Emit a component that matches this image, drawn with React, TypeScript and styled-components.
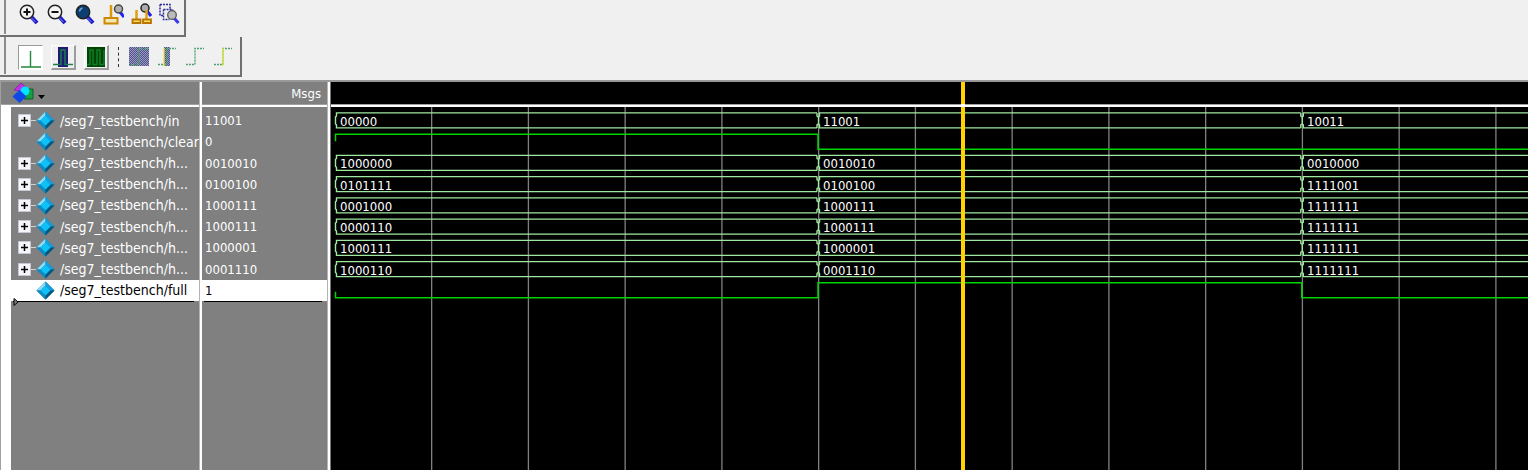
import React from "react";
import styled, { createGlobalStyle } from "styled-components";

const Global = createGlobalStyle`
  * { box-sizing: border-box; }
  body { margin: 0; background: #f0f0f0; font-family: "DejaVu Sans Condensed", "DejaVu Sans", sans-serif; font-size: 13px; }
`;

const Page = styled.main`
  display: flex;
  flex-direction: column;
  min-height: 100vh;
`;

const Toolbar = styled.div<{ $w: number; $h: number }>`
  display: flex;
  width: ${(p) => p.$w}px;
  height: ${(p) => p.$h}px;
  padding-left: 4px;
  border-right: 2px solid #707070;
  border-bottom: 2px solid #707070;
`;

const Grip = styled.span`
  width: 2px;
  margin-bottom: 1px;
  background: #8c8c8c;
`;

const ToolGroup = styled.div<{ $left: number; $top: number }>`
  display: flex;
  align-items: center;
  align-self: flex-start;
  gap: 8px;
  margin-left: ${(p) => p.$left}px;
  margin-top: ${(p) => p.$top}px;
`;

const ToolButton = styled.button<{ $look?: "pressed" | "raised" }>`
  display: flex;
  align-items: center;
  justify-content: center;
  width: ${(p) => (p.$look ? 25 : 20)}px;
  height: ${(p) => (p.$look ? 25 : 20)}px;
  padding: 0;
  background: ${(p) => (p.$look === "pressed" ? "#fff" : "transparent")};
  border: 0 solid;
  border-width: ${(p) => (p.$look === "raised" ? "1px 2px 2px 1px" : p.$look ? "1px" : "0")};
  border-color: ${(p) => (p.$look === "pressed" ? "#999 #fff #fff #999" : "#fff #9c9c9c #9c9c9c #fff")};

  svg {
    flex: none;
  }
`;

const Divider = styled.span`
  height: 20px;
  margin: 10px 0 0 9px;
  border-left: 1px dashed #333;
`;

const Panes = styled.div`
  flex: 1;
  display: grid;
  grid-template-columns: 199px 126px minmax(0, 1fr);
  column-gap: 2px;
  margin-top: 3px;
  border-top: 2px solid #999;
  border-left: 1px solid #a0a0a0;
  background: #fff;
`;

const Pane = styled.section`
  display: flex;
  flex-direction: column;
  border-right: 1px solid #b4b4b4;
`;

const WavePane = styled.section`
  position: relative;
  display: flex;
  flex-direction: column;
  border-left: 1px solid #777;
`;

const PaneHead = styled.header<{ $dark?: boolean }>`
  display: flex;
  align-items: center;
  height: 23px;
  margin-bottom: 2px;
  background: ${(p) => (p.$dark ? "#000" : "#808080")};
  color: #fff;
  border-bottom: 1px solid #a0a0a0;
`;

const MsgsHead = styled(PaneHead)`
  justify-content: flex-end;
  padding-right: 6px;
`;

const MenuButton = styled.button`
  display: flex;
  margin-left: 11px;
  padding: 0;
  border: 0;
  background: none;
`;

const PaneBody = styled.div<{ $inset?: boolean }>`
  flex: 1;
  margin-left: ${(p) => (p.$inset ? 10 : 0)}px;
  padding-top: 3px;
  background: #808080;
`;

const Rows = styled.div`
  display: grid;
  grid-template-rows: repeat(9, 1fr);
  height: 191px;
`;

const Row = styled.div<{ $selected?: boolean }>`
  display: flex;
  align-items: center;
  overflow: hidden;
  white-space: nowrap;
  color: ${(p) => (p.$selected ? "#000" : "#fff")};
  background: ${(p) => (p.$selected ? "#fff" : "transparent")};
`;

const ValueRow = styled(Row)`
  padding-left: 3px;
`;

const Expander = styled.button`
  display: flex;
  width: 18px;
  height: 13px;
  margin-left: 7px;
  padding: 0;
  border: 0;
  background: none;
`;

const Blank = styled.span`
  width: 18px;
  margin-left: 7px;
`;

const Name = styled.span`
  margin-left: 5px;
  font-size: 14px;
  line-height: 18px;
`;

const InsertLine = styled.div`
  height: 1px;
  margin: 0 5px 0 2px;
  background: #000;
`;

const InsertMark = styled.svg`
  position: absolute;
  margin: -4px 0 0 2px;
`;

const WaveBody = styled.div`
  flex: 1;
  background: #000;
  overflow: hidden;
`;

const WaveSvg = styled.svg`
  display: block;
  width: 100%;
  height: 100%;
  min-height: 200px;
`;

const Cursor = styled.div`
  position: absolute;
  top: 0;
  bottom: 0;
  left: 630px;
  width: 4px;
  background: linear-gradient(#ffd200 0 22px, #fff 22px 25px, #ffd200 25px);
`;

const signals = [
  { name: "/seg7_testbench/in", bus: true, values: ["00000", "11001", "10011"], now: "11001" },
  { name: "/seg7_testbench/clear", bus: false, values: ["1", "0", "0"], now: "0" },
  { name: "/seg7_testbench/h...", bus: true, values: ["1000000", "0010010", "0010000"], now: "0010010" },
  { name: "/seg7_testbench/h...", bus: true, values: ["0101111", "0100100", "1111001"], now: "0100100" },
  { name: "/seg7_testbench/h...", bus: true, values: ["0001000", "1000111", "1111111"], now: "1000111" },
  { name: "/seg7_testbench/h...", bus: true, values: ["0000110", "1000111", "1111111"], now: "1000111" },
  { name: "/seg7_testbench/h...", bus: true, values: ["1000111", "1000001", "1111111"], now: "1000001" },
  { name: "/seg7_testbench/h...", bus: true, values: ["1000110", "0001110", "1111111"], now: "0001110" },
  { name: "/seg7_testbench/full", bus: false, values: ["0", "1", "0"], now: "1" },
];

const EDGES = [4, 487, 970.8];
const END = 8000;
const PITCH = 21.24;
const SWING = 15;

function Lens({ sign, fill = "#f4f4f4" }: { sign?: "plus" | "minus"; fill?: string }) {
  return (
    <svg width="20" height="22" viewBox="0 0 20 22">
      <path d="M12.5 14 18 20" stroke="#1a1ac8" strokeWidth="4" />
      <path d="M12 14.500 16.500 19" stroke="#8a8aff" strokeWidth="1" />
      <circle cx="8" cy="9" r="6.700" fill={fill} stroke="#222" strokeWidth="1.500" />
      {sign && <path d={sign === "plus" ? "M4.500 9h7M8 5.500v7" : "M4.500 9h7"} stroke="#111" strokeWidth="2" />}
      {!sign && <path d="M4.500 8.500q.5-3 3-3.500" stroke="#6fa6d0" strokeWidth="1.500" fill="none" />}
    </svg>
  );
}

function CursorZoom({ twin }: { twin?: boolean }) {
  return (
    <svg width="21" height="22" viewBox="0 0 21 22">
      {twin ? (
        <>
          <path d="M16 8l4 5" stroke="#2020e0" strokeWidth="3" />
          <circle cx="14" cy="5" r="4" fill="#aaa" stroke="#222" strokeWidth="1.500" />
          <path d="M5.500 7v9M15.500 7v9" stroke="#e0a010" strokeWidth="2.500" />
          <path d="M1.500 16.500h8v3.500h-8zM12 16.500h8v3.500h-8z" stroke="#b87400" strokeWidth="1.800" fill="#ffe060" />
        </>
      ) : (
        <>
          <path d="M17 9l4 5" stroke="#2020ff" strokeWidth="3" />
          <circle cx="15.500" cy="6" r="4" fill="#b0b0b0" stroke="#444" strokeWidth="1.500" />
          <path d="M8 2v13" stroke="#dc9a08" strokeWidth="2.500" />
          <path d="M1.500 15h13v5.500h-13z" stroke="#cc8800" strokeWidth="2" fill="#f4e6b0" />
        </>
      )}
    </svg>
  );
}

function AreaZoom() {
  return (
    <svg width="21" height="22" viewBox="0 0 21 22">
      <path d="M1 1.500h10v4M1 1.500v11h3M4.500 6.500h9v4M4.500 6.500v10h6" fill="none" stroke="#2a2a9c" strokeWidth="1.500" strokeDasharray="2 1" />
      <path d="M15 15l4.500 5" stroke="#3838ee" strokeWidth="3" />
      <circle cx="13" cy="12" r="4.300" fill="#bbb" stroke="#555" strokeWidth="1.300" />
    </svg>
  );
}

function PulseIcon({ kind }: { kind: "edge" | "blue" | "green" }) {
  return (
    <svg width="22" height="22" viewBox="0 0 22 22">
      {kind === "edge" && <path d="M1 20h20M10.500 20V4" stroke="#22883c" strokeWidth="1.400" />}
      {kind === "blue" && (
        <>
          <path d="M6 1h10v20H6z" fill="#1c1c70" />
          <path d="M1 18.500h8V4h4v14.500h8" stroke="#1f7f50" strokeWidth="1.400" fill="none" />
        </>
      )}
      {kind === "green" && (
        <>
          <path d="M2 1h18v20H2z" fill="#004400" />
          <path d="M2 18.500h3V4h3v14.500h4V4h3v14.500h4V4" stroke="#108030" strokeWidth="1.400" fill="none" />
        </>
      )}
    </svg>
  );
}

function EdgeIcon({ fill, bar }: { fill?: "wide" | "narrow"; bar?: boolean }) {
  return (
    <svg width="20" height="22" viewBox="0 0 20 22">
      <defs>
        <pattern id="dither" width="2" height="2" patternUnits="userSpaceOnUse">
          <path d="M0 0h2v2H0z" fill="#9a9ac0" />
          <path d="M0 0h1v1H0zM1 1h1v1H1z" fill="#50508c" />
        </pattern>
      </defs>
      {fill && <path d={fill === "wide" ? "M0 1h20v19H0z" : "M7 1h6v19H7z"} fill="url(#dither)" />}
      <path d="M1 18.500h9v-16h9" fill="none" stroke="#4fa070" strokeWidth="1.400" strokeDasharray="2 1" />
      {bar && <path d={fill ? "M7 2v18" : "M10 2v18"} stroke="#e8e830" strokeWidth="1.200" />}
    </svg>
  );
}

function Diamond() {
  return (
    <svg width="19" height="19" viewBox="0 0 19 19">
      <path d="M9.500.5 18.500 9.500l-9 9-9-9z" fill="#0878a8" />
      <path d="M9.500.5v4L4.500 9.500h-4z" fill="#8cdcf4" />
      <path d="M.5 9.500h4l5 5v4z" fill="#0c8cc4" />
      <path d="M9.500.5l9 9h-4l-5-5z" fill="#1a9cd8" />
      <path d="M9.500 18.500v-4l5-5h4z" fill="#04587c" />
      <path d="M9.500 4.500l5 5-5 5-5-5z" fill="#10c0f8" />
    </svg>
  );
}

function WaveRow({ index }: { index: number }) {
  const s = signals[index];
  const hi = 5.9 + index * PITCH;
  const lo = hi + SWING;
  if (!s.bus) {
    const y = s.values.map((v) => (v === "1" ? hi : lo));
    const tick = s.values[0] === "1" ? 7 : -6;
    return (
      <path
        d={`M4.500 ${y[0] + tick}V${y[0]}H${EDGES[1]}V${y[1]}H${EDGES[2]}V${y[2]}H${END}`}
        fill="none"
        stroke="#00d400"
        strokeWidth="1.500"
      />
    );
  }
  return (
    <g fill="none" stroke="#a0e8a0" strokeWidth="1.400">
      {EDGES.map((x, i) => {
        const next = EDGES[i + 1] ?? END;
        return (
          <g key={x}>
            <path d={`M${next - 1} ${hi}H${x + 1.5}V${hi + 3}L${x + 0.5} ${hi + 4}V${lo - 4}L${x + 1.5} ${lo - 3}V${lo}H${next - 1}`} />
            {i > 0 && <path d={`M${x - 1} ${hi}V${hi + 3}L${x} ${hi + 4}M${x} ${lo - 4}L${x - 1} ${lo - 3}V${lo}`} />}
            <text x={Math.round(x) + 5} y={Math.round(hi) + 13} fill="#fff" stroke="none">
              {s.values[i]}
            </text>
          </g>
        );
      })}
    </g>
  );
}

export default function App() {
  return (
    <Page>
      <Global />
      <Toolbar $w={186} $h={37}>
        <Grip />
        <ToolGroup $left={13} $top={4}>
          <ToolButton aria-label="Zoom in"><Lens sign="plus" /></ToolButton>
          <ToolButton aria-label="Zoom out"><Lens sign="minus" /></ToolButton>
          <ToolButton aria-label="Zoom full"><Lens fill="#0c3f70" /></ToolButton>
          <ToolButton aria-label="Zoom in on cursor"><CursorZoom /></ToolButton>
          <ToolButton aria-label="Zoom between cursors"><CursorZoom twin /></ToolButton>
          <ToolButton aria-label="Zoom area"><AreaZoom /></ToolButton>
        </ToolGroup>
      </Toolbar>
      <Toolbar $w={242} $h={40}>
        <Grip />
        <ToolGroup $left={12} $top={8}>
          <ToolButton $look="pressed" aria-label="Edge"><PulseIcon kind="edge" /></ToolButton>
          <ToolButton $look="raised" aria-label="Pulse"><PulseIcon kind="blue" /></ToolButton>
          <ToolButton $look="raised" aria-label="Pulses"><PulseIcon kind="green" /></ToolButton>
        </ToolGroup>
        <Divider />
        <ToolGroup $left={10} $top={10}>
          <ToolButton aria-label="Fill range"><EdgeIcon fill="wide" /></ToolButton>
          <ToolButton aria-label="Fill edge"><EdgeIcon fill="narrow" bar /></ToolButton>
          <ToolButton aria-label="Rising edge"><EdgeIcon /></ToolButton>
          <ToolButton aria-label="Marked edge"><EdgeIcon bar /></ToolButton>
        </ToolGroup>
      </Toolbar>
      <Panes>
        <Pane>
          <PaneHead>
            <MenuButton aria-label="Signal options">
              <svg width="34" height="20" viewBox="0 0 34 20">
                <path d="M2 7 9 0l6 5-4 5-4-2z" fill="#c030e8" stroke="#6a1888" strokeWidth=".6" />
                <path d="M12 6h9v10h-9z" fill="#18a040" stroke="#0c6028" />
                <circle cx="13" cy="8" r="4.500" fill="#00e4ff" />
                <path d="M7.500 7l7 6.500-7 6.500-7-6.500z" fill="#1048e8" />
                <path d="M26 12h7l-3.500 4z" fill="#000" />
              </svg>
            </MenuButton>
          </PaneHead>
          <PaneBody $inset>
            <Rows>
              {signals.map((s, i) => (
                <Row key={i} $selected={i === 8}>
                  {s.bus ? (
                    <Expander aria-label={`Expand ${s.name}`}>
                      <svg width="18" height="13" viewBox="0 0 18 13">
                        <path d="M12 6.500h6" stroke="#d0d0d0" />
                        <path d="M.5.5h12v12H.5z" fill="#f6f6fa" stroke="#c4c8d4" />
                        <path d="M3 6.500h7M6.500 3v7" stroke="#000" strokeWidth="1.500" />
                      </svg>
                    </Expander>
                  ) : (
                    <Blank />
                  )}
                  <Diamond />
                  <Name>{s.name}</Name>
                </Row>
              ))}
            </Rows>
            <InsertMark width="6" height="10" viewBox="0 0 6 10">
              <path d="M1 1.500v7L5 5z" fill="#808080" stroke="#000" />
            </InsertMark>
            <InsertLine />
          </PaneBody>
        </Pane>
        <Pane>
          <MsgsHead>Msgs</MsgsHead>
          <PaneBody>
            <Rows>
              {signals.map((s, i) => (
                <ValueRow key={i} $selected={i === 8}>{s.now}</ValueRow>
              ))}
            </Rows>
            <InsertLine />
          </PaneBody>
        </Pane>
        <WavePane>
          <PaneHead $dark />
          <WaveBody>
            <WaveSvg>
              {Array.from({ length: 60 }, (_, i) => (
                <rect key={i} x={100 + i * 96.75} y="0" width="1.300" height="100%" fill="#808080" />
              ))}
              {signals.map((_, i) => (
                <WaveRow key={i} index={i} />
              ))}
            </WaveSvg>
          </WaveBody>
          <Cursor />
        </WavePane>
      </Panes>
    </Page>
  );
}
